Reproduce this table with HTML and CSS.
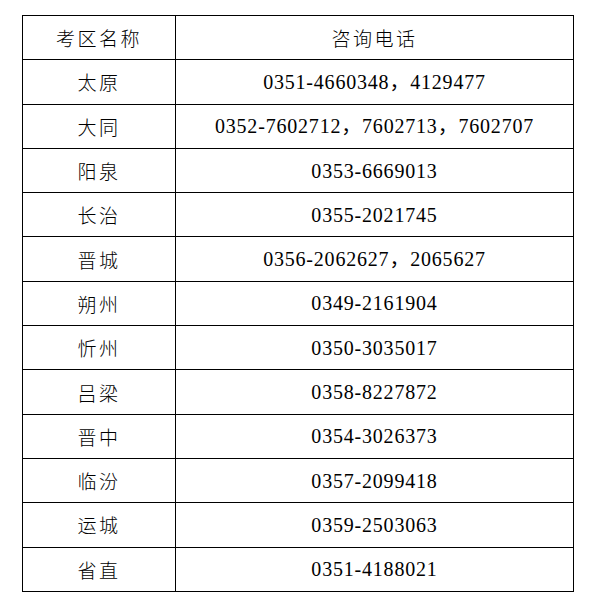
FILE: index.html
```html
<!DOCTYPE html>
<html lang="zh-CN">
<head>
<meta charset="utf-8">
<title>咨询电话</title>
<link rel="stylesheet" href="styles.css">
</head>
<body>
<div class="page">
  <table class="contact">
    <tbody>
      <tr><th class="area">考区名称</th><th class="phone">咨询电话</th></tr>
      <tr><td class="area">太原</td><td class="phone">0351-4660348，4129477</td></tr>
      <tr><td class="area">大同</td><td class="phone">0352-7602712，7602713，7602707</td></tr>
      <tr><td class="area">阳泉</td><td class="phone">0353-6669013</td></tr>
      <tr><td class="area">长治</td><td class="phone">0355-2021745</td></tr>
      <tr><td class="area">晋城</td><td class="phone">0356-2062627，2065627</td></tr>
      <tr><td class="area">朔州</td><td class="phone">0349-2161904</td></tr>
      <tr><td class="area">忻州</td><td class="phone">0350-3035017</td></tr>
      <tr><td class="area">吕梁</td><td class="phone">0358-8227872</td></tr>
      <tr><td class="area">晋中</td><td class="phone">0354-3026373</td></tr>
      <tr><td class="area">临汾</td><td class="phone">0357-2099418</td></tr>
      <tr><td class="area">运城</td><td class="phone">0359-2503063</td></tr>
      <tr><td class="area">省直</td><td class="phone">0351-4188021</td></tr>
    </tbody>
  </table>
</div>
</body>
</html>
```
FILE: styles.css
```css
html, body {
  margin: 0;
  padding: 0;
  background: #fff;
}

.page {
  padding: 15px 0 0 22px;
}

.contact {
  border-collapse: collapse;
  width: 552px;
  table-layout: fixed;
  color: #000;
}

.contact tr {
  height: 44.31px;
}

.contact th,
.contact td {
  border: 1px solid #000;
  padding: 0;
  text-align: center;
  vertical-align: middle;
  font-weight: normal;
  line-height: 1;
}

.contact .area {
  width: 152px;
  font-family: "Noto Sans CJK SC", sans-serif;
  font-weight: 300;
  font-size: 19px;
  letter-spacing: 2.5px;
}

.contact th.phone {
  font-family: "Noto Sans CJK SC", sans-serif;
  font-weight: 300;
  font-size: 19px;
  letter-spacing: 2.5px;
}

.contact td.phone {
  font-family: "Liberation Serif", "Noto Sans CJK SC", serif;
  font-size: 20px;
  letter-spacing: 0.8px;
}
```
